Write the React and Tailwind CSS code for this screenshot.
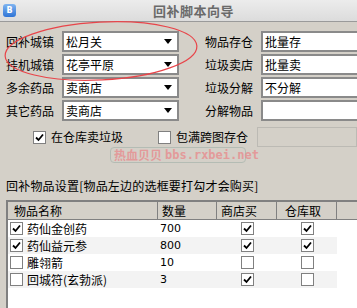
import React from 'react'

const items = [
  { name: '药仙金创药', qty: '700', on: true, shop: true, bank: true },
  { name: '药仙益元参', qty: '800', on: true, shop: true, bank: true },
  { name: '雕翎箭', qty: '10', on: false, shop: false, bank: false },
  { name: '回城符(玄勃派)', qty: '3', on: false, shop: true, bank: false },
]

function Check({ on }) {
  return (
    <div className="w-[13px] h-[13px] border border-[#808080] bg-white flex items-center justify-center shrink-0">
      {on && (
        <svg width="9" height="9" viewBox="0 0 9 9">
          <path d="M1 4.5L3.5 7L8 1.5" stroke="#000" strokeWidth="1.8" fill="none" />
        </svg>
      )}
    </div>
  )
}

function Combo({ value }) {
  return (
    <div className="w-[117px] h-[21px] shrink-0 border-2 border-[#8a8a8a] bg-white flex items-center pl-[2px] pr-[5px]">
      <span className="flex-1 leading-none whitespace-nowrap">{value}</span>
      <svg width="8" height="5" viewBox="0 0 8 5">
        <path d="M0 0H8L4 5Z" fill="#000" />
      </svg>
    </div>
  )
}

function Field({ value, disabled }) {
  if (disabled) {
    return <div className="w-[100px] h-[20px] border border-[#bcbab4] bg-[#d4d0c8]" />
  }
  return (
    <div className="w-[100px] h-[21px] border-2 border-[#8a8a8a] bg-white flex items-center pl-[2px]">
      <span className="leading-none whitespace-nowrap">{value}</span>
    </div>
  )
}

function Row({ left, combo, right, field }) {
  return (
    <div className="flex items-center h-[21px]">
      <div className="w-[62px] pl-[6px] shrink-0 leading-none whitespace-nowrap">{left}</div>
      <Combo value={combo} />
      <div className="w-[74px] shrink-0 text-right leading-none whitespace-nowrap">{right}</div>
      <div className="ml-[8px] shrink-0">
        <Field value={field} />
      </div>
    </div>
  )
}

export default function App() {
  return (
    <div className="relative w-[357px] h-[308px] overflow-hidden bg-[#d4d0c8] text-black text-[12px] font-['Noto_Sans_CJK_SC','Noto_Sans',sans-serif]">
      {/* title bar */}
      <div className="h-[22px] bg-gradient-to-b from-[#ececec] to-[#dcdcdc] border-b border-[#9a9a9a] flex items-center">
        <div className="ml-[3px] w-[13px] h-[13px] rounded-[3px] bg-gradient-to-b from-[#7fb4f0] to-[#2e74d6] flex items-center justify-center">
          <span className="text-white text-[8px] font-bold leading-none font-['DejaVu_Sans',sans-serif]">B</span>
        </div>
        <div className="ml-[137px] text-[13px] font-bold text-[#6a6a6a] leading-none tracking-[0.5px] whitespace-nowrap">回补脚本向导</div>
      </div>

      <div className="pt-[9px] flex flex-col gap-[2px]">
        <Row left="回补城镇" combo="松月关" right="物品存仓" field="批量存" />
        <Row left="挂机城镇" combo="花亭平原" right="垃圾卖店" field="批量卖" />
        <Row left="多余药品" combo="卖商店" right="垃圾分解" field="不分解" />
        <Row left="其它药品" combo="卖商店" right="分解物品" field="" />
      </div>

      <div className="mt-[6px] flex items-center h-[20px] whitespace-nowrap">
        <div className="ml-[33px]"><Check on /></div>
        <span className="ml-[5px] leading-none w-[111px]">在仓库卖垃圾</span>
        <div><Check on={false} /></div>
        <span className="ml-[5px] leading-none w-[72px]">包满跨图存仓</span>
        <div className="ml-[9px]"><Field disabled /></div>
      </div>

      <div className="mt-[33px] pl-[6px] leading-none whitespace-nowrap tracking-[0.2px]">回补物品设置[物品左边的选框要打勾才会购买]</div>

      {/* list */}
      <div className="ml-[6px] mt-[8px] w-[360px] h-[110px] border-2 border-[#808080] bg-white">
        <div className="flex h-[18px] bg-[#d4d0c8] border-b border-[#808080] leading-none whitespace-nowrap">
          <div className="w-[150px] pl-[6px] flex items-center border-r border-[#808080]">物品名称</div>
          <div className="w-[59px] pl-[4px] flex items-center border-r border-[#808080]">数量</div>
          <div className="w-[60px] pl-[4px] flex items-center border-r border-[#808080]">商店买</div>
          <div className="w-[60px] pl-[8px] flex items-center border-r border-[#808080]">仓库取</div>
          <div className="flex-1" />
        </div>
        {items.map((it, i) => (
          <div key={it.name} className={`flex items-center h-[17px] w-[329px] whitespace-nowrap ${i % 2 ? 'bg-[#f3f3f3]' : 'bg-white'}`}>
            <div className="w-[150px] flex items-center pl-[2px]">
              <Check on={it.on} />
              <span className="ml-[4px] leading-none">{it.name}</span>
            </div>
            <div className="w-[59px] pl-[2px] text-[11px] leading-none font-['DejaVu_Sans',sans-serif]">{it.qty}</div>
            <div className="w-[60px] flex justify-center"><Check on={it.shop} /></div>
            <div className="w-[60px] flex justify-center"><Check on={it.bank} /></div>
          </div>
        ))}
      </div>

      {/* watermark */}
      <div className="absolute left-[110px] top-[147px] w-[136px] h-[16px] rounded-[4px] border border-[#b4bcb4] flex items-center pl-[3px] font-bold text-[#e39a9a] leading-none whitespace-nowrap">
        <span>热血贝贝</span>
        <span className="ml-[3px] font-['DejaVu_Sans_Mono',monospace]">bbs.rxbei.net</span>
      </div>

      {/* red annotation ellipse */}
      <svg className="absolute left-0 top-0 pointer-events-none" width="357" height="308">
        <ellipse cx="101" cy="51" rx="96" ry="29" transform="rotate(-3 101 51)" fill="none" stroke="#e8454a" strokeWidth="1.2" />
      </svg>
    </div>
  )
}
